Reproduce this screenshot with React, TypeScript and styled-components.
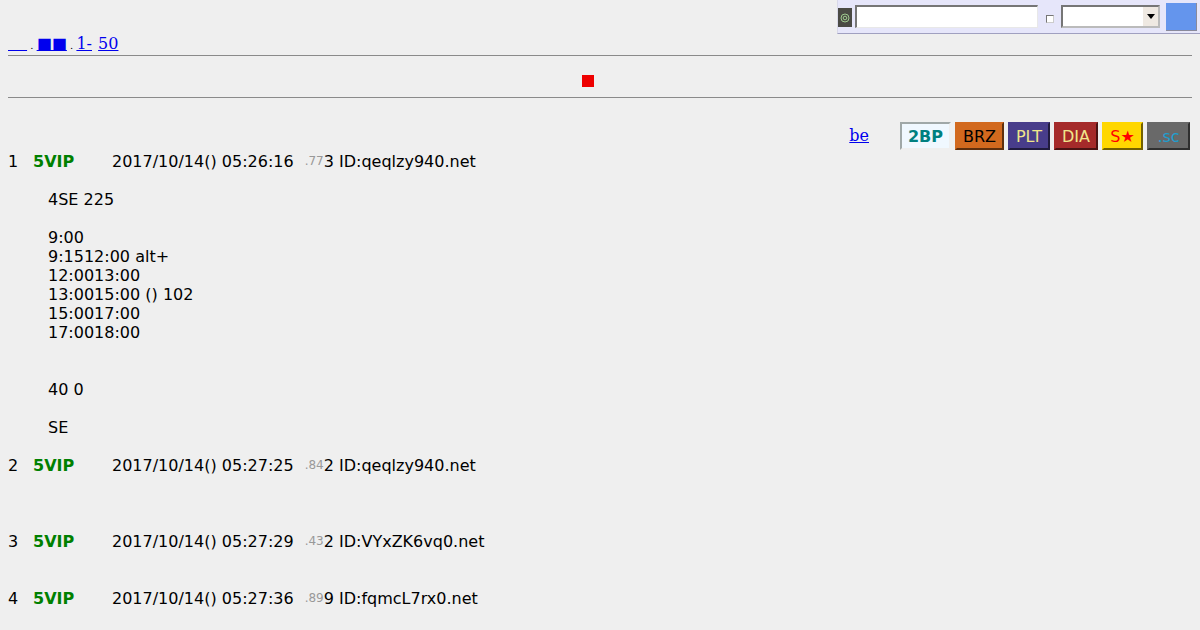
import React from "react";
import styled, { createGlobalStyle } from "styled-components";

const Global = createGlobalStyle`
	html, body {
		margin: 0;
		background: #efefef;
		color: #000;
		font-family: "DejaVu Serif", serif;
		font-size: 16px;
	}
	body {
		padding: 8px 8px 0;
		box-sizing: border-box;
	}
`;

const SearchBar = styled.form`
	position: absolute;
	top: 0;
	right: 0;
	width: 363px;
	height: 34px;
	box-sizing: border-box;
	background: #e6e6fa;
	border-left: 1px solid #d8d8e8;
	border-bottom: 1px solid #a0a0c0;
	display: flex;
	align-items: flex-start;
`;

const Logo = styled.span`
	width: 14px;
	height: 19px;
	margin-top: 8px;
	background: #4a4a44;
	display: flex;
	align-items: center;
	justify-content: center;
`;

const SearchField = styled.div`
	width: 183px;
	height: 23px;
	margin: 5px 0 0 3px;
	box-sizing: border-box;
	background: #fff;
	border: 1px solid #e8e8e8;
	border-top: 2px solid #767676;
	border-left: 2px solid #767676;
`;

const Check = styled.span`
	width: 6px;
	height: 6px;
	margin: 15px 0 0 8px;
	background: #fff;
	border: 1px solid #767676;
	border-right-color: #ccc;
	border-bottom-color: #ccc;
`;

const SelectBox = styled.div`
	width: 99px;
	height: 23px;
	margin: 5px 0 0 7px;
	box-sizing: border-box;
	background: #fff;
	border: 2px solid #767676;
	border-right-color: #bbb;
	border-bottom-color: #bbb;
	display: flex;
	justify-content: flex-end;
`;

const SelectArrow = styled.span`
	width: 15px;
	background: #efe9e2;
	display: flex;
	align-items: center;
	justify-content: center;
	&::after {
		content: "";
		border-left: 4.5px solid transparent;
		border-right: 4.5px solid transparent;
		border-top: 5px solid #000;
	}
`;

const GoButton = styled.div`
	width: 31px;
	height: 28px;
	margin: 3px 0 0 6px;
	box-sizing: border-box;
	background: #6495ed;
	border-right: 1px solid #8a8a9a;
	border-bottom: 1px solid #8a8a9a;
`;

const NavRow = styled.div`
	height: 47px;
	padding-top: 26px;
	box-sizing: border-box;
	line-height: 19px;
`;

const NavLink = styled.a`
	color: #0000ee;
	text-decoration: underline;
`;

const Blank = styled(NavLink)`
	font-size: 15px;
`;

const RangeEnd = styled(NavLink)`
	margin-left: 1px;
`;

const Dot = styled.span`
	font-size: 10px;
`;

const Rule = styled.hr`
	margin: 0;
	border: 0;
	height: 1px;
	background: #8a8a8a;
`;

const Title = styled.div`
	height: 41px;
	box-sizing: border-box;
	padding-top: 8px;
	display: flex;
	align-items: center;
	justify-content: center;
`;

const Square = styled.span`
	width: 12px;
	height: 12px;
	background: #ee0000;
	margin-left: -24px;
`;

const TagRow = styled.div`
	display: flex;
	justify-content: flex-end;
	align-items: center;
	height: 28px;
	margin-top: 24px;
	padding-right: 2px;
	gap: 4px;
`;

const BeLink = styled.a`
	color: #0000ee;
	text-decoration: underline;
	margin: 0 27px 2px 0;
	font-size: 16px;
`;

const Tag = styled.span<{ $bg: string; $fg: string; $bold?: boolean; $w: number; $inset?: boolean }>`
	width: ${(p) => p.$w}px;
	height: 28px;
	box-sizing: border-box;
	background: ${(p) => p.$bg};
	color: ${(p) => p.$fg};
	font-family: "DejaVu Sans", sans-serif;
	font-size: 16px;
	font-weight: ${(p) => (p.$bold ? "bold" : "normal")};
	display: flex;
	align-items: center;
	justify-content: center;
	border: 2px solid transparent;
	border-right-color: ${(p) => (p.$inset ? "#efefef" : "rgba(0,0,0,.55)")};
	border-bottom-color: ${(p) => (p.$inset ? "#efefef" : "rgba(0,0,0,.55)")};
	border-top-color: ${(p) => (p.$inset ? "#a0a8a8" : "transparent")};
	border-left-color: ${(p) => (p.$inset ? "#a0a8a8" : "transparent")};
`;

const Thread = styled.div`
	font-family: "DejaVu Sans", sans-serif;
	font-size: 16px;
	line-height: 19px;
	margin-top: 2px;
`;

const Post = styled.div`
	margin-bottom: 19px;
	&:last-child {
		margin-bottom: 0;
	}
`;

const Meta = styled.div`
	display: flex;
	white-space: pre;
`;

const Num = styled.span`
	width: 25px;
`;

const Name = styled.b`
	width: 79px;
	color: #008000;
`;

const Stamp = styled.span`
	margin-right: 11px;
`;

const Ip = styled.span`
	font-size: 12px;
	color: #999;
`;

const Body = styled.div`
	padding: 19px 0 0 40px;
	white-space: pre;
`;

const posts = [
	{
		n: 1,
		when: "2017/10/14() 05:26:16",
		ip: ".77",
		id: "3 ID:qeqlzy940.net",
		text: "4SE 225\n\n9:00\n9:1512:00 alt+\n12:0013:00\n13:0015:00 () 102\n15:0017:00\n17:0018:00\n\n\n40 0\n\nSE",
	},
	{ n: 2, when: "2017/10/14() 05:27:25", ip: ".84", id: "2 ID:qeqlzy940.net", text: " " },
	{ n: 3, when: "2017/10/14() 05:27:29", ip: ".43", id: "2 ID:VYxZK6vq0.net", text: "" },
	{ n: 4, when: "2017/10/14() 05:27:36", ip: ".89", id: "9 ID:fqmcL7rx0.net", text: "" },
];

export default function App() {
	return (
		<>
			<Global />
			<SearchBar>
				<Logo>
					<svg width="10" height="10" viewBox="0 0 10 10">
						<circle cx="5" cy="5" r="4" fill="none" stroke="#9fc98f" strokeWidth="1" />
						<circle cx="5" cy="5" r="1.8" fill="none" stroke="#9fc98f" strokeWidth="1" />
					</svg>
				</Logo>
				<SearchField />
				<Check />
				<SelectBox>
					<SelectArrow />
				</SelectBox>
				<GoButton />
			</SearchBar>
			<NavRow>
				<Blank href="#">{"\u00a0\u00a0\u00a0\u00a0"}</Blank>
				<Dot> . </Dot>
				<NavLink href="#">■■</NavLink>
				<Dot> . </Dot>
				<NavLink href="#">1-</NavLink> <RangeEnd href="#">50</RangeEnd>
			</NavRow>
			<Rule />
			<Title>
				<Square />
			</Title>
			<Rule />
			<TagRow>
				<BeLink href="#">be</BeLink>
				<Tag $bg="#f0f8ff" $fg="#008080" $bold $w={51} $inset>2BP</Tag>
				<Tag $bg="#d2691e" $fg="#000" $w={49}>BRZ</Tag>
				<Tag $bg="#483d8b" $fg="#f0e68c" $w={42}>PLT</Tag>
				<Tag $bg="#a52a2a" $fg="#f0e68c" $w={44}>DIA</Tag>
				<Tag $bg="#ffd700" $fg="#f00" $w={41}>S★</Tag>
				<Tag $bg="#696969" $fg="#1e9fd0" $w={43}>.sc</Tag>
			</TagRow>
			<Thread>
				{posts.map((p) => (
					<Post key={p.n}>
						<Meta>
							<Num>{p.n}</Num>
							<Name>5VIP</Name>
							<Stamp>{p.when}</Stamp>
							<Ip>{p.ip}</Ip>
							<span>{p.id}</span>
						</Meta>
						<Body>{p.text}</Body>
					</Post>
				))}
			</Thread>
		</>
	);
}
